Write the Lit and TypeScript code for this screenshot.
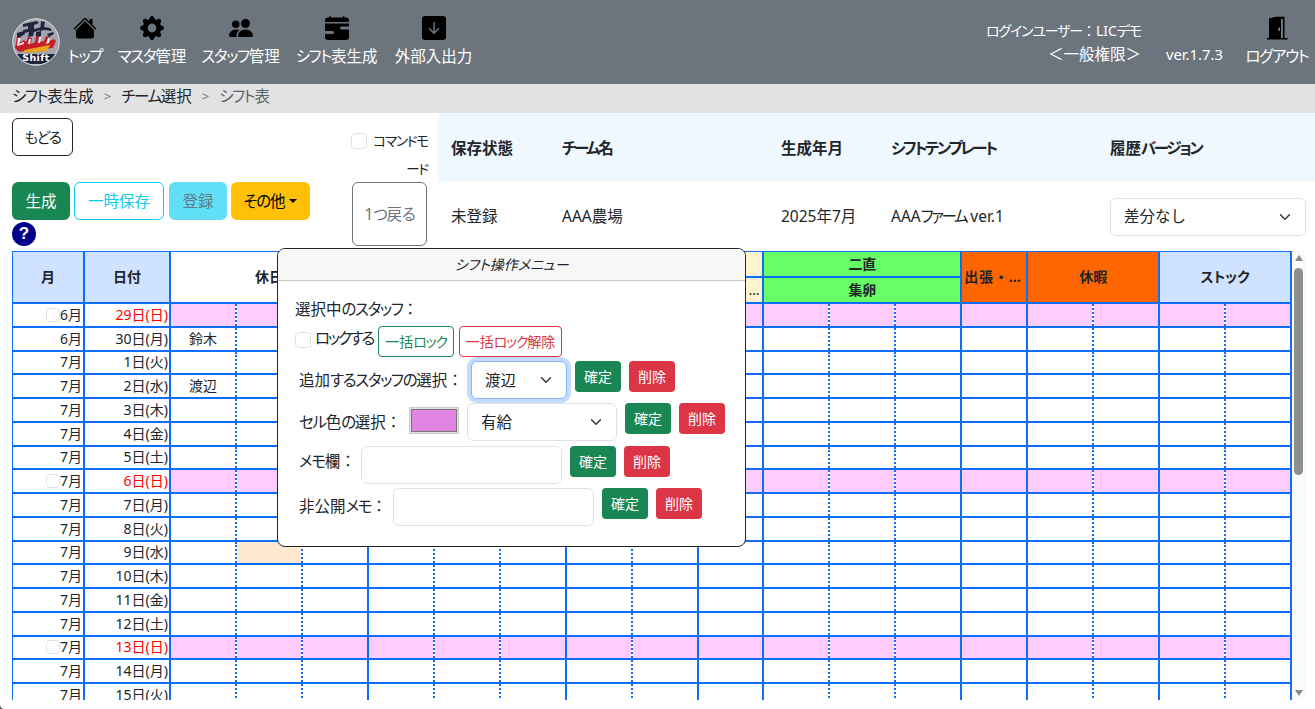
import { LitElement, html, css, svg } from "lit";
import { customElement } from "lit/decorators.js";

const ic = (c: unknown) => html`<svg class="ic" viewBox="0 0 16 16" fill="currentColor">${c}</svg>`;
const icons = {
  home: ic(svg`<path d="M8.707 1.5a1 1 0 0 0-1.414 0L.646 8.146a.5.5 0 0 0 .708.708L8 2.207l6.646 6.647a.5.5 0 0 0 .708-.708L13 5.793V2.5a.5.5 0 0 0-.5-.5h-1a.5.5 0 0 0-.5.5v1.293L8.707 1.5Z"/><path d="m8 3.293 6 6V13.5a1.5 1.5 0 0 1-1.5 1.5h-9A1.5 1.5 0 0 1 2 13.5V9.293l6-6Z"/>`),
  gear: ic(svg`<path d="M9.405 1.05c-.413-1.4-2.397-1.4-2.81 0l-.1.34a1.464 1.464 0 0 1-2.105.872l-.31-.17c-1.283-.698-2.686.705-1.987 1.987l.169.311c.446.82.023 1.841-.872 2.105l-.34.1c-1.4.413-1.4 2.397 0 2.81l.34.1a1.464 1.464 0 0 1 .872 2.105l-.17.31c-.698 1.283.705 2.686 1.987 1.987l.311-.169a1.464 1.464 0 0 1 2.105.872l.1.34c.413 1.4 2.397 1.4 2.81 0l.1-.34a1.464 1.464 0 0 1 2.105-.872l.31.17c1.283.698 2.686-.705 1.987-1.987l-.169-.311a1.464 1.464 0 0 1 .872-2.105l.34-.1c1.4-.413 1.4-2.397 0-2.81l-.34-.1a1.464 1.464 0 0 1-.872-2.105l.17-.31c.698-1.283-.705-2.686-1.987-1.987l-.311.169a1.464 1.464 0 0 1-2.105-.872l-.1-.34zM8 10.93a2.929 2.929 0 1 1 0-5.86 2.929 2.929 0 0 1 0 5.858z"/>`),
  people: ic(svg`<path d="M7 14s-1 0-1-1 1-4 5-4 5 3 5 4-1 1-1 1H7Zm4-6a3 3 0 1 0 0-6 3 3 0 0 0 0 6Zm-5.784 6A2.238 2.238 0 0 1 5 13c0-1.355.68-2.75 1.936-3.72A6.325 6.325 0 0 0 5 9c-4 0-5 3-5 4s1 1 1 1h4.216ZM4.500 8a2.500 2.500 0 1 0 0-5 2.500 2.500 0 0 0 0 5Z"/>`),
  cal: ic(svg`<path d="M4 .5a.5.5 0 0 0-1 0V1H2a2 2 0 0 0-2 2v1h16V3a2 2 0 0 0-2-2h-1V.5a.5.5 0 0 0-1 0V1H4V.5zM16 7V5H0v5h5a1 1 0 0 1 0 2H0v2a2 2 0 0 0 2 2h12a2 2 0 0 0 2-2V9h-5a1 1 0 1 1 0-2h5z"/>`),
  down: ic(svg`<path d="M2 0a2 2 0 0 0-2 2v12a2 2 0 0 0 2 2h12a2 2 0 0 0 2-2V2a2 2 0 0 0-2-2H2zm6.500 4.500v5.793l2.146-2.147a.5.5 0 0 1 .708.708l-3 3a.5.5 0 0 1-.708 0l-3-3a.5.5 0 1 1 .708-.708L7.500 10.293V4.500a.5.5 0 0 1 1 0z"/>`),
};

const door = html`<svg class="ic" viewBox="0 0 24 24"><path fill="#000" fill-rule="evenodd" d="M4 22V2.500L11 .8h8.500V22h3v1.500H2V22zM16 3v19h2V3z"/><rect x="13.500" y="11.500" width="1.300" height="3.500" fill="#9aa0a6"/></svg>`;

const logo = html`<svg class="logo" viewBox="0 0 48 48">
  <defs><clipPath id="lc"><circle cx="24" cy="24" r="23"/></clipPath></defs>
  <circle cx="24" cy="24" r="23.500" fill="#d0d2d6"/>
  <g clip-path="url(#lc)">
    <rect width="48" height="48" fill="#a3a6ae"/>
    <path fill="#20243c" d="M11 6l14-3 2 2-5 2 0 4 8-2 2 2-10 3-1 4-5 1 1-5-5 1-1-3 5-1 0-3-5 1zM29 3l4 1-1 5 6 1 2 3-7-1-5 1zM5 15l7-2 1 3-5 3-3 0zM35 16l6-2 1 2-5 3zM24 14l5-1 0 5-5 1z"/>
    <path fill="#c81e2a" d="M3 30l2-11 4 0-1 6 4-3 2 2 2-5 4 1-1 6 4-2 1-6 4 0-1 6 5-1 2-5 4 1-1 4 5-2 2 2-3 7-9 1-10 2-9 0-6 1z"/>
    <path fill="#f4f4f4" d="M6 20l3 0-2 6 5-2 0 2-7 2zM17 21l2 0-1 5-2 0zM27 19l2 0-1 6-2 0zM36 20l2 0-1 5-3 1z"/>
    <path fill="#e8a31f" d="M12 32l26-5-3 6-22 2z"/>
    <path fill="#20243c" d="M5 36l38 0-4 10H10z"/>
    <text x="24" y="43" text-anchor="middle" class="lt">Shift</text>
  </g>
  <circle cx="24" cy="24" r="23.200" fill="none" stroke="#d5d7da" stroke-width="1"/>
</svg>`;

// The reference's Japanese face has narrow kana and full-width punctuation:
// kana runs are tightened, punctuation is kept at full width.
const jp = (s: string) =>
  s.split(/([ァ-ヶーぁ-ん]+|[：＜＞]+)/).map((p) =>
    /^[ァ-ヶーぁ-ん]/.test(p) ? html`<span class="k">${p}</span>` : /^[：＜＞]/.test(p) ? html`<span class="f">${p}</span>` : p
  );

const chk = html`<input class="cb" type="checkbox" />`;

const days: [string, number, string][] = [
  ["6月", 29, "日"], ["6月", 30, "月"], ["7月", 1, "火"], ["7月", 2, "水"], ["7月", 3, "木"], ["7月", 4, "金"],
  ["7月", 5, "土"], ["7月", 6, "日"], ["7月", 7, "月"], ["7月", 8, "火"], ["7月", 9, "水"], ["7月", 10, "木"],
  ["7月", 11, "金"], ["7月", 12, "土"], ["7月", 13, "日"], ["7月", 14, "月"], ["7月", 15, "火"], ["7月", 16, "水"],
];
// last-column-of-group flags for the 17 shift columns: dotted inside a group, solid at its end
const groupEnd = [0, 0, 1, 0, 0, 1, 0, 1, 1, 0, 0, 1, 1, 0, 1, 0, 1];
const names: Record<number, string> = { 30: "鈴木", 2: "渡辺" };

@customElement("app-root")
export class AppRoot extends LitElement {
  static styles = css`
    :host {
      display: flex; flex-direction: column; position: relative; height: 709px; width: 1315px; overflow: hidden; background: #fff;
      font-family: "Noto Sans", "Noto Sans CJK JP", sans-serif; font-size: 15.500px; color: #212529;
      font-feature-settings: "palt"; line-height: 21px;
    }
    * { box-sizing: border-box; }
    .k { letter-spacing: -.085em; }
    .f { font-feature-settings: "palt" 0; }
    .hdr { height: 84px; background: #6c757d; display: flex; color: #fff; padding-left: 12px; flex: none; }
    .logo { width: 48px; height: 48px; margin-top: 18px; flex: none; }
    .lt { font: 700 9.500px "DejaVu Sans", sans-serif; fill: #fff; letter-spacing: .4px; }
    .nav { display: flex; margin-left: 8px; gap: 16px; padding-top: 16px; }
    .ni { display: flex; flex-direction: column; align-items: center; }
    .ic { width: 24px; height: 24px; color: #000; display: block; flex: none; }
    .nl { margin-top: 6px; white-space: nowrap; }
    .w1 { width: 34px; } .w2 { width: 68px; } .w3 { width: 77px; } .w4 { width: 83px; } .w5 { width: 79px; }
    .user { margin-left: auto; display: flex; }
    .uinfo { text-align: right; padding-top: 20px; width: 170px; line-height: 22.500px; white-space: nowrap; }
    .uinfo .u1 { font-size: 14px; padding-right: 0; }
    .ver { margin: 44px 0 0 25px; width: 60px; font-size: 14.800px; }
    .out { display: flex; flex-direction: column; align-items: center; width: 60px; margin: 16px 8px 0 21px; }
    .crumb { height: 29px; flex: none; background: #e2e2e2; padding: 2px 12px 0; display: flex; gap: 10px; }
    .crumb .sep { color: #6c757d; font-size: 13px; }
    .crumb .cur { color: #5a6268; }
    .top { display: flex; height: 138px; flex: none; }
    .tl { width: 438px; flex: none; padding: 5px 0 0 12px; display: grid; grid-template-columns: 340px 75px; grid-template-rows: 64px 64px; }
    .btn { display: inline-flex; align-items: center; justify-content: center; border-radius: 6px; border: 1px solid transparent; background: none; font: inherit; font-feature-settings: inherit; color: inherit; padding: 0; white-space: nowrap; }
    .back { width: 61px; height: 38px; border-color: #212529; align-self: start; justify-self: start; font-size: 14.500px; }
    .cmd { justify-self: end; width: 76px; margin-right: -1px; padding-top: 9px; text-align: right; font-size: 13.500px; line-height: 28px; grid-column: 2; grid-row: 1; }
    .cmd .cb { float: left; margin: 6px 0 0 -1px; }
    .backrow { grid-column: 1; grid-row: 2; display: flex; flex-wrap: wrap; gap: 0 4px; align-content: flex-start; }
    .b1 { width: 58px; height: 38px; background: #198754; color: #fff; }
    .b2 { width: 90px; height: 38px; border-color: #0dcaf0; color: #0dcaf0; }
    .b3 { width: 58px; height: 38px; background: #61dff7; color: #5e7d87; margin-left: 1px; }
    .b4 { width: 79px; height: 38px; background: #ffc107; color: #000; }
    .b4::after { content: ""; margin-left: 4px; border-top: 4px solid; border-left: 4px solid transparent; border-right: 4px solid transparent; }
    .q { width: 24px; height: 24px; border-radius: 50%; background: #00008b; color: #fff; font-weight: 700; font-size: 17px; line-height: 24px; text-align: center; margin-top: 2px; flex: none; font-family: "Liberation Sans", sans-serif; }
    .brk { flex-basis: 100%; height: 0; }
    .undo { grid-column: 2; grid-row: 2; width: 75px; height: 64px; border-color: #6c757d; color: #6c757d; margin-left: 0; }
    .info { flex: 1; display: grid; grid-template-columns: 124px 219px 110px 219px 1fr; grid-template-rows: 69px 69px; }
    .info > div { display: flex; align-items: center; white-space: pre; }
    .info .k { letter-spacing: -.15em; }
    .ih { background: aliceblue; font-weight: 700; padding-top: 2px; }
    .ih.f2, .iv.f2 { padding-left: 13px; }
    .sel { appearance: none; font: inherit; font-feature-settings: "palt" 0; color: #212529; background: #fff url("data:image/svg+xml,%3csvg xmlns='http://www.w3.org/2000/svg' viewBox='0 0 16 16'%3e%3cpath fill='none' stroke='%23343a40' stroke-linecap='round' stroke-linejoin='round' stroke-width='2' d='m2 5 6 6 6-6'/%3e%3c/svg%3e") no-repeat right 12px center / 16px 12px; border: 1px solid #dee2e6; border-radius: 6px; height: 38px; padding: 0 36px 0 13px; }
    .hist { width: 196px; }
    .grid { flex: 1; display: flex; min-height: 0; height: 449px; }
    .tw { margin-left: 12px; width: 1280px; height: 449px; overflow: hidden; flex: none; font-size: 14px; }
    table { border-collapse: collapse; table-layout: fixed; width: 1281px; margin: -1px 0 0 -1px; }
    td, th { border: 2px solid #0d6efd; padding: 0; font-weight: 400; overflow: hidden; white-space: nowrap; }
    th { font-weight: 700; text-align: center; height: 26px; line-height: 20px; }
    td { height: 23.750px; line-height: 20px; }
    .d { border-right-style: dotted; }
    .dl { border-left-style: dotted; }
    .blue { background: #cfe2ff; } .cream { background: #fff3cd; } .green { background: #66ff66; } .orange { background: #ff6600; }
    th.full { font-feature-settings: "palt" 0; text-align: left; padding-left: 2px; letter-spacing: .8px; }
    .r { text-align: right; padding-right: 1px; }
    .red { color: #f00; }
    .pink { background: #ffccff; }
    .peach { background: #fde9cf; }
    .c { text-align: center; }
    .rt { text-align: right; padding-right: 3px; font-weight: 400; }
    .cb { appearance: none; width: 16px; height: 16px; border: 1px solid #dee2e6; border-radius: 4px; background: #fff; margin: 0; flex: none; }
    .mini { width: 14px; height: 14px; vertical-align: -2px; margin-right: 0; }
    .sb { width: 14px; height: 449px; background: #fbfbfb; position: relative; display: flex; flex-direction: column; align-items: center; flex: none; }
    .ua { margin-top: 4px; border-bottom: 6px solid #8a8a8a; border-left: 4.500px solid transparent; border-right: 4.500px solid transparent; }
    .th { width: 9px; height: 207px; margin-top: 7px; background: #8f8f8f; border-radius: 5px; margin-right: 1px; }
    .da { margin-top: auto; margin-bottom: 4px; border-top: 6px solid #8a8a8a; border-left: 4.500px solid transparent; border-right: 4.500px solid transparent; }
    .menu { position: absolute; left: 277px; top: 248px; width: 469px; height: 299px; background: #fff; border: 1px solid #212529; border-radius: 8px; overflow: hidden; }
    .mh { height: 32px; background: #f7f7f7; border-bottom: 1px solid #c8c8c8; text-align: center; font-style: italic; line-height: 31px; font-size: 14px; }
    .mb { padding: 18px 0 0 17px; display: flex; flex-direction: column; }
    .m1 { height: 21px; line-height: 21px; margin-bottom: 6px; }
    .m2 { display: flex; align-items: flex-start; height: 31px; margin-bottom: 4px; }
    .m2 .cb { margin-top: 6px; }
    .m2 span.lk { margin: 2px 4px 0 4px; width: 59px; white-space: nowrap; }
    .m2 span.lk .k { letter-spacing: -.14em; }
    .small { height: 31px; border-radius: 4px; font-size: 14px; }
    .og { width: 76px; border-color: #198754; color: #198754; }
    .or { width: 103px; border-color: #dc3545; color: #dc3545; margin-left: 5px; }
    .row { display: flex; padding-left: 4px; height: 38px; align-items: flex-start; margin-bottom: 4.300px; }
    .lb { flex: none; white-space: nowrap; line-height: 38px; }
    .lb1 { width: 172px; } .lb2 { width: 110px; } .lb3 { width: 62px; line-height: 30px; } .lb4 { width: 94px; line-height: 36px; }
    .ok, .del { width: 46px; height: 31px; border-radius: 4px; color: #fff; flex: none; font-size: 14px; }
    .ok { background: #198754; margin-left: 8px; }
    .del { background: #dc3545; margin-left: 8px; }
    .s1 { width: 96px; border-color: #86b7fe; box-shadow: 0 0 0 4px rgba(13,110,253,.25); }
    .s2 { width: 150px; margin-left: 8px; }
    .swatch { width: 50px; height: 27px; margin: 4px 0 0; flex: none; padding: 0; border: 1px solid #ccc; background: #e0e0e0; }
    .swatch::-webkit-color-swatch-wrapper { padding: 1px; }
    .swatch::-webkit-color-swatch { border: 1px solid #777; }
    .inp { width: 201px; height: 38px; border: 1px solid #dee2e6; border-radius: 6px; background: #fff; flex: none; font: inherit; }
    .corner { position: absolute; left: 0; bottom: 0; width: 4px; height: 4px; background: radial-gradient(circle at 100% 0, transparent 3.500px, #555 4px); }
  `;

  private tableBody() {
    return days.map(([m, d, w]) => {
      const sun = w === "日";
      return html`<tr>
        <td class="r">${sun ? html`<input class="cb mini" type="checkbox" />` : ""}${m}</td>
        <td class="r ${sun ? "red" : ""}">${d}日(${w})</td>
        ${groupEnd.map((g, i) => {
          const cls = [g ? "" : "d", i > 0 && !groupEnd[i - 1] ? "dl" : "", sun ? "pink" : "", d === 9 && i === 1 ? "peach" : "", i === 0 ? "c" : ""].join(" ");
          return html`<td class=${cls}>${i === 0 && !sun ? names[d] ?? "" : ""}</td>`;
        })}
      </tr>`;
    });
  }

  render() {
    const actions = html`<button class="btn ok">確定</button><button class="btn del">削除</button>`;
    return html`
      <div class="hdr">
        ${logo}
        <div class="nav">
          <div class="ni w1">${icons.home}<div class="nl">${jp("トップ")}</div></div>
          <div class="ni w2">${icons.gear}<div class="nl">${jp("マスタ管理")}</div></div>
          <div class="ni w3">${icons.people}<div class="nl">${jp("スタッフ管理")}</div></div>
          <div class="ni w4">${icons.cal}<div class="nl">${jp("シフト表生成")}</div></div>
          <div class="ni w5">${icons.down}<div class="nl">外部入出力</div></div>
        </div>
        <div class="user">
          <div class="uinfo"><div class="u1">${jp("ログインユーザー：LICデモ")}</div><div>${jp("＜一般権限＞")}</div></div>
          <div class="ver">ver.1.7.3</div>
          <div class="out">${door}<div class="nl">${jp("ログアウト")}</div></div>
        </div>
      </div>
      <div class="crumb"><span>${jp("シフト表生成")}</span><span class="sep">&gt;</span><span>${jp("チーム選択")}</span><span class="sep">&gt;</span><span class="cur">${jp("シフト表")}</span></div>
      <div class="top">
        <div class="tl">
          <button class="btn back">${jp("もどる")}</button>
          <div class="cmd">${chk}${jp("コマンドモード")}</div>
          <div class="backrow">
            <button class="btn b1">生成</button>
            <button class="btn b2">一時保存</button>
            <button class="btn b3">登録</button>
            <button class="btn b4">${jp("その")}他</button>
            <div class="brk"></div>
            <div class="q">?</div>
          </div>
          <button class="btn undo">${jp("1つ戻る")}</button>
        </div>
        <div class="info">
          <div class="ih f2">保存状態</div><div class="ih">${jp("チーム名")}</div><div class="ih">生成年月</div><div class="ih">${jp("シフトテンプレート")}</div><div class="ih">${jp("履歴バージョン")}</div>
          <div class="iv f2">未登録</div><div class="iv">AAA農場</div><div class="iv">2025年7月</div><div class="iv">AAA${jp("ファーム")} ver.1</div>
          <div class="iv"><select class="sel hist"><option>差分なし</option></select></div>
        </div>
      </div>
      <div class="grid">
        <div class="tw">
          <table>
            <colgroup>
              <col style="width:72px" /><col style="width:86px" />
              ${groupEnd.map(() => html`<col style="width:65.94px" />`)}
            </colgroup>
            <thead>
              <tr>
                <th rowspan="2" class="blue">月</th>
                <th rowspan="2" class="blue">日付</th>
                <th rowspan="2" colspan="3">休日</th>
                <th rowspan="2" colspan="3"></th>
                <th rowspan="2" colspan="2" class="cream"></th>
                <th class="cream"></th>
                <th colspan="3" class="green">二直</th>
                <th rowspan="2" class="orange full">出張・…</th>
                <th rowspan="2" colspan="2" class="orange">休暇</th>
                <th rowspan="2" colspan="2" class="blue">ストック</th>
              </tr>
              <tr>
                <th class="cream rt">…</th>
                <th colspan="3" class="green">集卵</th>
              </tr>
            </thead>
            <tbody>${this.tableBody()}</tbody>
          </table>
        </div>
        <div class="sb"><div class="ua"></div><div class="th"></div><div class="da"></div></div>
      </div>
      <div class="menu">
        <div class="mh">シフト操作メニュー</div>
        <div class="mb">
          <div class="m1">${jp("選択中のスタッフ：")}</div>
          <div class="m2">${chk}<span class="lk">${jp("ロックする")}</span><button class="btn small og">一括${jp("ロック")}</button><button class="btn small or">一括${jp("ロック")}解除</button></div>
          <div class="row"><div class="lb lb1">${jp("追加するスタッフの選択：")}</div><select class="sel s1"><option>渡辺</option></select>${actions}</div>
          <div class="row"><div class="lb lb2">${jp("セル色の選択：")}</div><input class="swatch" type="color" value="#e184e1" /><select class="sel s2"><option>有給</option></select>${actions}</div>
          <div class="row"><div class="lb lb3">${jp("メモ欄：")}</div><input class="inp" />${actions}</div>
          <div class="row"><div class="lb lb4">${jp("非公開メモ：")}</div><input class="inp" />${actions}</div>
        </div>
      </div>
      <div class="corner"></div>
    `;
  }
}
